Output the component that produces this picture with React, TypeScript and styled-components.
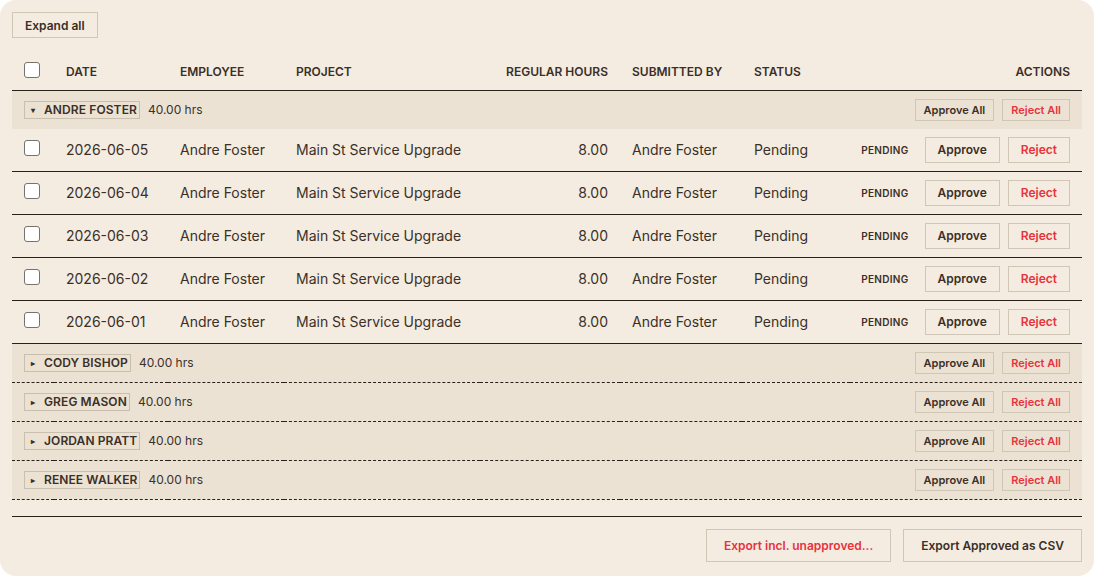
import React, { useState } from 'react'
import styled, { createGlobalStyle } from 'styled-components'

const GlobalStyle = createGlobalStyle`
  html, body {
    margin: 0;
    padding: 0;
    background: #ffffff;
  }
  body {
    font-family: Inter, "Noto Sans", sans-serif;
    color: #3b2f27;
  }
`

const Card = styled.div`
  width: 1094px;
  height: 576px;
  box-sizing: border-box;
  background: #f4ece0;
  border-radius: 16px;
  padding: 12px 12px 0 12px;
  display: flex;
  flex-direction: column;
`

const TopBar = styled.div`
  display: flex;
  margin-bottom: 12px;
`

const Btn = styled.button<{ $danger?: boolean; $size?: 'sm' | 'md' | 'lg' }>`
  font-family: Inter, "Noto Sans", sans-serif;
  font-weight: 600;
  background: transparent;
  border: 1px solid #d0c6b6;
  color: ${(p) => (p.$danger ? '#e8323d' : '#3b2f27')};
  border-radius: 0;
  cursor: pointer;
  box-sizing: border-box;
  white-space: nowrap;
  font-size: ${(p) => (p.$size === 'sm' ? '11px' : '12px')};
  height: ${(p) => (p.$size === 'sm' ? '22px' : p.$size === 'lg' ? '33px' : '26px')};
  padding: ${(p) => (p.$size === 'sm' ? '0 8px' : p.$size === 'lg' ? '0 17px' : '0 12px')};
`

const ExpandBtn = styled(Btn)`
  height: 26px;
  padding: 0 12px;
`

const TableWrap = styled.div`
  border-bottom: 1px solid #2b211b;
  padding-bottom: 16px;
`

const Table = styled.table`
  width: 1070px;
  border-collapse: collapse;
  table-layout: fixed;
`

const Th = styled.th<{ $right?: boolean }>`
  height: 40px;
  padding: 3px 12px 0 12px;
  box-sizing: border-box;
  font-size: 12px;
  font-weight: 600;
  text-transform: uppercase;
  text-align: ${(p) => (p.$right ? 'right' : 'left')};
  color: #3b2f27;
  border-bottom: 1px solid #2b211b;
  white-space: nowrap;
`

const CheckTh = styled(Th)`
  padding-top: 0;
`

const Td = styled.td<{ $right?: boolean }>`
  padding: 8px 12px;
  font-size: 14px;
  color: #3b3029;
  text-align: ${(p) => (p.$right ? 'right' : 'left')};
  white-space: nowrap;
  height: 26px;
`

const DataRow = styled.tr`
  border-bottom: 1px solid #2b211b;
`

const GroupRow = styled.tr<{ $open?: boolean }>`
  background: #ebe2d3;
  border-bottom: ${(p) => (p.$open ? 'none' : '1px dashed #2b211b')};
`

const GroupCell = styled.td`
  padding: 8px 12px;
`

const GroupInner = styled.div`
  display: flex;
  align-items: center;
  gap: 8px;
  height: 22px;
`

const Toggle = styled.button`
  display: flex;
  align-items: center;
  gap: 7px;
  height: 18px;
  box-sizing: border-box;
  padding: 0 2px 0 5px;
  background: transparent;
  border: 1px solid #c9bfae;
  font-family: Inter, "Noto Sans", sans-serif;
  font-size: 12px;
  font-weight: 600;
  letter-spacing: 0.1px;
  color: #3b2f27;
  text-transform: uppercase;
  cursor: pointer;
`

const Caret = styled.span`
  font-size: 8px;
  width: 7px;
  line-height: 1;
`

const Hours = styled.span`
  font-size: 12px;
  color: #3b3029;
`

const Spacer = styled.div`
  flex: 1;
`

const Check = styled.input`
  appearance: none;
  width: 16px;
  height: 16px;
  margin: 0;
  border: 1px solid #76726d;
  border-radius: 3px;
  background: #ffffff;
  display: block;
`

const RowCheck = styled(Check)`
  margin-top: -3px;
`

const Actions = styled.div`
  display: flex;
  align-items: center;
  justify-content: flex-end;
  gap: 8px;
`

const Badge = styled.span`
  font-size: 10px;
  font-weight: 600;
  letter-spacing: 0.3px;
  color: #3b2f27;
  margin-right: 8px;
`

const Footer = styled.div`
  display: flex;
  justify-content: flex-end;
  gap: 12px;
  padding-top: 12px;
`

const groups = [
  { name: 'Andre Foster', hrs: '40.00 hrs' },
  { name: 'Cody Bishop', hrs: '40.00 hrs' },
  { name: 'Greg Mason', hrs: '40.00 hrs' },
  { name: 'Jordan Pratt', hrs: '40.00 hrs' },
  { name: 'Renee Walker', hrs: '40.00 hrs' },
]

const dates = ['2026-06-05', '2026-06-04', '2026-06-03', '2026-06-02', '2026-06-01']

const App: React.FC = () => {
  const [open, setOpen] = useState<Record<string, boolean>>({ 'Andre Foster': true })

  return (
    <>
      <GlobalStyle />
      <Card>
        <TopBar>
          <ExpandBtn>Expand all</ExpandBtn>
        </TopBar>
        <TableWrap>
          <Table>
            <colgroup>
              <col style={{ width: 42 }} />
              <col style={{ width: 114 }} />
              <col style={{ width: 116 }} />
              <col style={{ width: 196 }} />
              <col style={{ width: 140 }} />
              <col style={{ width: 122 }} />
              <col style={{ width: 108 }} />
              <col />
            </colgroup>
            <thead>
              <tr>
                <CheckTh><Check type="checkbox" /></CheckTh>
                <Th>Date</Th>
                <Th>Employee</Th>
                <Th>Project</Th>
                <Th $right>Regular Hours</Th>
                <Th>Submitted By</Th>
                <Th>Status</Th>
                <Th $right>Actions</Th>
              </tr>
            </thead>
            {groups.map((g) => {
              const isOpen = !!open[g.name]
              return (
                <tbody key={g.name}>
                  <GroupRow $open={isOpen}>
                    <GroupCell colSpan={8}>
                      <GroupInner>
                        <Toggle onClick={() => setOpen({ ...open, [g.name]: !isOpen })}>
                          <Caret>{isOpen ? '▾' : '▸'}</Caret>
                          {g.name}
                        </Toggle>
                        <Hours>{g.hrs}</Hours>
                        <Spacer />
                        <Btn $size="sm">Approve All</Btn>
                        <Btn $size="sm" $danger>Reject All</Btn>
                      </GroupInner>
                    </GroupCell>
                  </GroupRow>
                  {isOpen &&
                    dates.map((d) => (
                      <DataRow key={d}>
                        <Td><RowCheck type="checkbox" /></Td>
                        <Td>{d}</Td>
                        <Td>{g.name}</Td>
                        <Td>Main St Service Upgrade</Td>
                        <Td $right>8.00</Td>
                        <Td>{g.name}</Td>
                        <Td>Pending</Td>
                        <Td>
                          <Actions>
                            <Badge>PENDING</Badge>
                            <Btn>Approve</Btn>
                            <Btn $danger>Reject</Btn>
                          </Actions>
                        </Td>
                      </DataRow>
                    ))}
                </tbody>
              )
            })}
          </Table>
        </TableWrap>
        <Footer>
          <Btn $size="lg" $danger>Export incl. unapproved...</Btn>
          <Btn $size="lg">Export Approved as CSV</Btn>
        </Footer>
      </Card>
    </>
  )
}

export default App
